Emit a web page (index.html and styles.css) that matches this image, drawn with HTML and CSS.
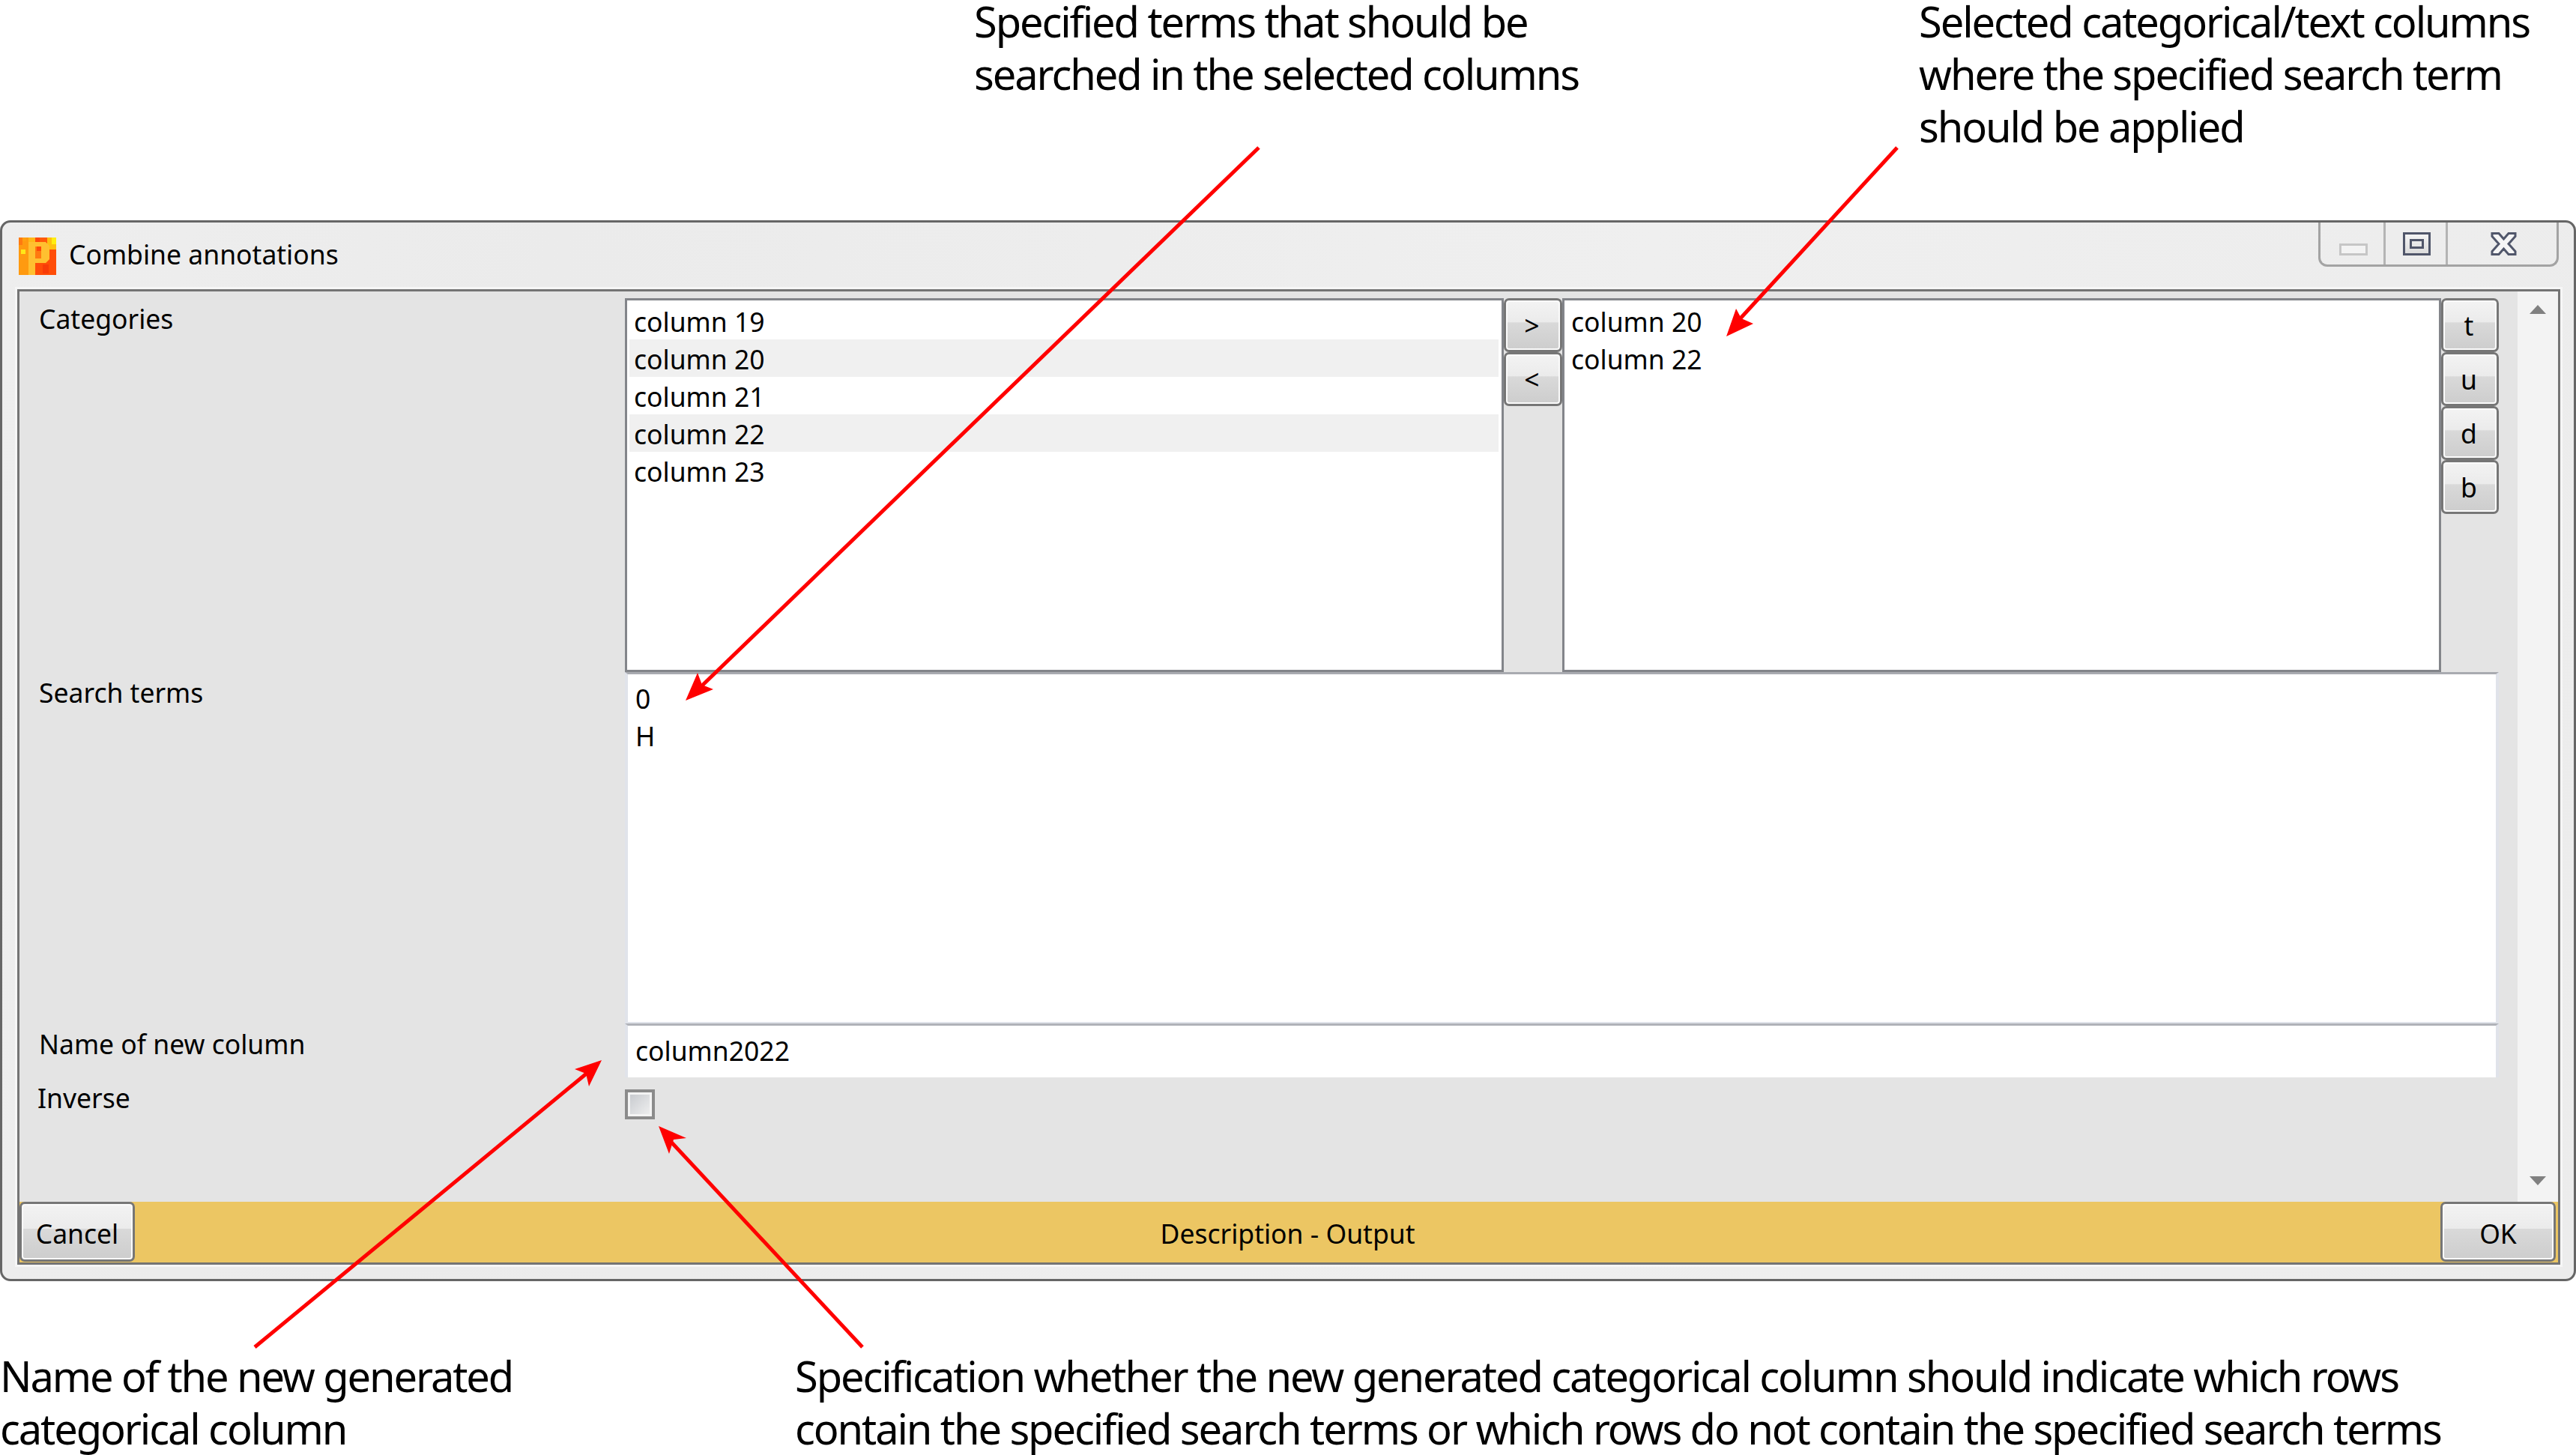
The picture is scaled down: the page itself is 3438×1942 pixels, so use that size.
FILE: index.html
```html
<!DOCTYPE html>
<html lang="en">
<head>
    <meta charset="UTF-8">
    <title>Combine annotations</title>
    <link rel="stylesheet" href="styles.css">
</head>
<body>

<div class="notes notes-top">
    <p class="note note-terms">Specified terms that should be<br>searched in the selected columns</p>
    <p class="note">Selected categorical/text columns<br>where the specified search term<br>should be applied</p>
</div>

<div class="window">
    <div class="titlebar">
        <svg class="app-icon" viewBox="0 0 50 50" width="50" height="50">
            <rect width="50" height="50" fill="#ff4d08"/>
            <rect width="13" height="50" fill="#ff9a10"/>
            <rect x="13" y="28" width="9" height="22" fill="#ffb020"/>
            <rect x="0" y="0" width="5" height="10" fill="#ff7a10"/>
            <rect x="5" y="0" width="5" height="5" fill="#ffa010"/>
            <rect x="3" y="16" width="6" height="6" fill="#ffe818"/>
            <rect x="13" y="0" width="9" height="6" fill="#ffb818"/>
            <rect x="22" y="0" width="6" height="6" fill="#ff4a08"/>
            <rect x="28" y="0" width="10" height="6" fill="#ff5a08"/>
            <rect x="38" y="0" width="12" height="16" fill="#ffc010"/>
            <rect x="44" y="0" width="6" height="9" fill="#ffee10"/>
            <path d="M13 6h23l5 5v18l-5 5H22v16h-9z" fill="#ffc030"/>
            <rect x="22" y="12" width="8" height="16" fill="#ff7a10"/>
            <rect x="24" y="12" width="6" height="6" fill="#ff4a08"/>
            <rect x="32" y="36" width="8" height="12" fill="#f83c08"/>
        </svg>
        <span class="title">Combine annotations</span>
        <div class="caption">
            <div class="caption-btn btn-min"><span class="min-icon"></span></div>
            <div class="caption-btn btn-max"><span class="max-icon"><span></span></span></div>
            <div class="caption-btn btn-close">
                <svg viewBox="0 0 35 31" width="35" height="31">
                    <path d="M2 1.500h9l6.500 7.500 6.500-7.500h9v4l-9 10 9 10v4h-9l-6.500-7.500-6.500 7.500h-9v-4l9-10-9-10z" fill="#f5f5f5" stroke="#50566a" stroke-width="3"/>
                </svg>
            </div>
        </div>
    </div>

    <div class="panel">
        <div class="panel-body">
            <div class="form">
                <label class="field-label label-first">Categories</label>
                <div class="picker">
                    <ul class="list">
                        <li>column 19</li>
                        <li class="alt">column 20</li>
                        <li>column 21</li>
                        <li class="alt">column 22</li>
                        <li>column 23</li>
                    </ul>
                    <div class="btn-stack move-btns">
                        <button class="btn">&gt;</button>
                        <button class="btn">&lt;</button>
                    </div>
                    <ul class="list">
                        <li>column 20</li>
                        <li>column 22</li>
                    </ul>
                    <div class="btn-stack order-btns">
                        <button class="btn">t</button>
                        <button class="btn">u</button>
                        <button class="btn">d</button>
                        <button class="btn">b</button>
                    </div>
                </div>

                <label class="field-label label-search">Search terms</label>
                <textarea class="search-box">0
H</textarea>

                <label class="field-label label-name">Name of new column</label>
                <input class="name-box" type="text" value="column2022">

                <label class="field-label label-inverse">Inverse</label>
                <div class="check-row"><input class="check" type="checkbox"></div>
            </div>
            <div class="scrollbar">
                <span class="arrow arrow-up"></span>
                <span class="arrow arrow-down"></span>
            </div>
        </div>
        <div class="footer">
            <button class="btn btn-cancel">Cancel</button>
            <span class="footer-text">Description - Output</span>
            <button class="btn btn-ok">OK</button>
        </div>
    </div>
</div>

<div class="notes notes-bottom">
    <p class="note note-name">Name of the new generated<br>categorical column</p>
    <p class="note">Specification whether the new generated categorical column should indicate which rows<br>contain the specified search terms or which rows do not contain the specified search terms</p>
</div>

<!-- red callouts over the dialog -->
<svg class="callouts" viewBox="0 0 3438 1942" width="3438" height="1942">
    <g stroke="#f00" stroke-width="5" fill="none">
        <line x1="1680" y1="197" x2="935" y2="917"/>
        <line x1="2532" y1="197" x2="2320" y2="428"/>
        <line x1="340" y1="1798" x2="785" y2="1431"/>
        <line x1="1151" y1="1798" x2="890" y2="1518"/>
    </g>
    <g fill="#f00">
        <polygon points="915,935 931,898 937,914 952,920"/>
        <polygon points="2304,449 2317,412 2324,425 2340,432"/>
        <polygon points="803,1415 767,1427 782,1433 786,1450"/>
        <polygon points="879,1503 916,1519 899,1521 893,1540"/>
    </g>
</svg>

</body>
</html>
```

FILE: styles.css
```css
* {
    margin: 0;
    padding: 0;
    box-sizing: border-box;
}

body {
    position: relative;
    width: 3438px;
    height: 1942px;
    overflow: hidden;
    background-color: #fff;
    color: #000;
    font-family: "Noto Sans", sans-serif;
}

/* Annotations around the dialog */
.notes {
    display: flex;
}

.notes-top {
    height: 301px;
    margin-top: -7px;
    padding-left: 1300px;
}

.notes-bottom {
    padding-top: 91px;
}

.note {
    font-size: 56px;
    line-height: 70px;
    letter-spacing: -2.1px;
    white-space: nowrap;
}

.note-terms {
    width: 1261px;
}

.note-name {
    width: 1061px;
}

/* Dialog window */
.window {
    display: flex;
    flex-direction: column;
    height: 1416px;
    padding: 0 18px 19px 20px;
    border: 3px solid #666;
    border-radius: 14px;
    background: linear-gradient(100deg, #eeeeee, #ebebeb 20%, #efefef 60%, #ececec);
    font-size: 35.500px;
    line-height: 50px;
}

.titlebar {
    display: flex;
    align-items: center;
    height: 89px;
    padding-left: 2px;
}

.app-icon {
    flex: none;
}

.title {
    margin: 0 0 5px 17px;
}

.caption {
    display: flex;
    align-self: flex-start;
    height: 59px;
    margin-left: auto;
    margin-right: 2px;
    border: 3px solid #a3a3a3;
    border-top: none;
    border-radius: 0 0 12px 12px;
}

.caption-btn {
    display: flex;
    justify-content: center;
    padding-top: 13px;
}

.btn-min {
    width: 87px;
    padding-top: 28px;
    padding-left: 4px;
    border-right: 3px solid #b4b4b4;
}

.btn-max {
    width: 83px;
    padding-left: 3px;
    border-right: 3px solid #b4b4b4;
}

.btn-close {
    width: 145px;
    padding-left: 4px;
}

.min-icon {
    width: 38px;
    height: 16px;
    border: 3px solid #c6c6c6;
    background-color: #f3f3f3;
}

.max-icon {
    display: flex;
    justify-content: center;
    align-items: center;
    width: 37px;
    height: 31px;
    border: 3px solid #50566a;
    background: linear-gradient(#f4f4f4, #dcdcdc);
}

.max-icon span {
    width: 19px;
    height: 13px;
    border: 3px solid #50566a;
}

.panel {
    display: flex;
    flex: 1;
    flex-direction: column;
    border: 3px solid #747474;
    background-color: #e4e4e4;
    box-shadow: 0 0 0 3px #f6f6f6;
}

.panel-body {
    display: flex;
    flex: 1;
}

.form {
    display: grid;
    flex: 1;
    grid-template-columns: 808px 1fr;
    grid-template-rows: 499px 469px 72px auto;
    align-content: start;
    padding: 9px 25px 0 0;
}

.field-label {
    padding-left: 26px;
}

.label-first {
    margin-top: 2px;
}

.label-search {
    margin-top: 2px;
}

.label-name {
    margin-top: 2px;
}

.label-inverse {
    margin-top: 2px;
    padding-left: 24px;
}

.picker {
    display: flex;
}

.list {
    flex: 1;
    padding: 2px 4px 0 3px;
    border: 3px solid #83858a;
    background-color: #fff;
    list-style: none;
}

.list li {
    height: 50px;
    padding: 1px 0 0 6px;
}

.list .alt {
    background-color: #f0f0f0;
}

.btn-stack {
    display: flex;
    flex: none;
    flex-direction: column;
}

.move-btns {
    width: 78px;
}

.order-btns {
    width: 77px;
}

.btn {
    border: 3px solid #767676;
    border-radius: 7px;
    background: linear-gradient(#f3f3f3, #ebebeb 44%, #d9d9d9 45%, #cdcdcd);
    box-shadow: inset 0 0 0 2px #fbfbfb;
    color: #000;
    font: inherit;
}

.btn-stack .btn {
    height: 72px;
    padding-right: 3px;
}

.search-box,
.name-box {
    display: block;
    width: 100%;
    border: solid #e0e3ea;
    outline: none;
    background-color: #fff;
    color: #000;
    font: inherit;
}

.search-box {
    height: 469px;
    padding: 7px 10px 0;
    border-width: 3px 4px 2px;
    border-top-color: #a9abb0;
    overflow: hidden;
    resize: none;
}

.name-box {
    height: 72px;
    padding: 0 10px 3px;
    border-width: 3px 4px 0;
    border-top-color: #b0b2b8;
}

.check-row {
    padding-top: 16px;
}

.check {
    display: block;
    width: 40px;
    height: 40px;
    border: 4px solid #8b8b8b;
    background: linear-gradient(135deg, #c4c7cc, #f2f2f2);
    box-shadow: inset 0 0 0 3px #f4f4f4;
    appearance: none;
}

.scrollbar {
    display: flex;
    flex: none;
    flex-direction: column;
    justify-content: space-between;
    align-items: center;
    width: 54px;
    padding: 18px 0 22px;
    background-color: #f3f3f3;
}

.arrow {
    width: 0;
    height: 0;
    border-right: 11px solid transparent;
    border-left: 11px solid transparent;
}

.arrow-up {
    border-bottom: 12px solid #808080;
}

.arrow-down {
    border-top: 12px solid #808080;
}

.footer {
    display: flex;
    flex: none;
    align-items: flex-start;
    height: 81px;
    background-color: #ecc663;
}

.footer .btn {
    height: 80px;
    padding-top: 3px;
}

.btn-cancel {
    width: 154px;
}

.btn-ok {
    width: 154px;
    margin-right: 3px;
}

.footer-text {
    flex: 1;
    align-self: center;
    padding-top: 3px;
    text-align: center;
}

.callouts {
    position: absolute;
    top: 0;
    left: 0;
    pointer-events: none;
}
```
